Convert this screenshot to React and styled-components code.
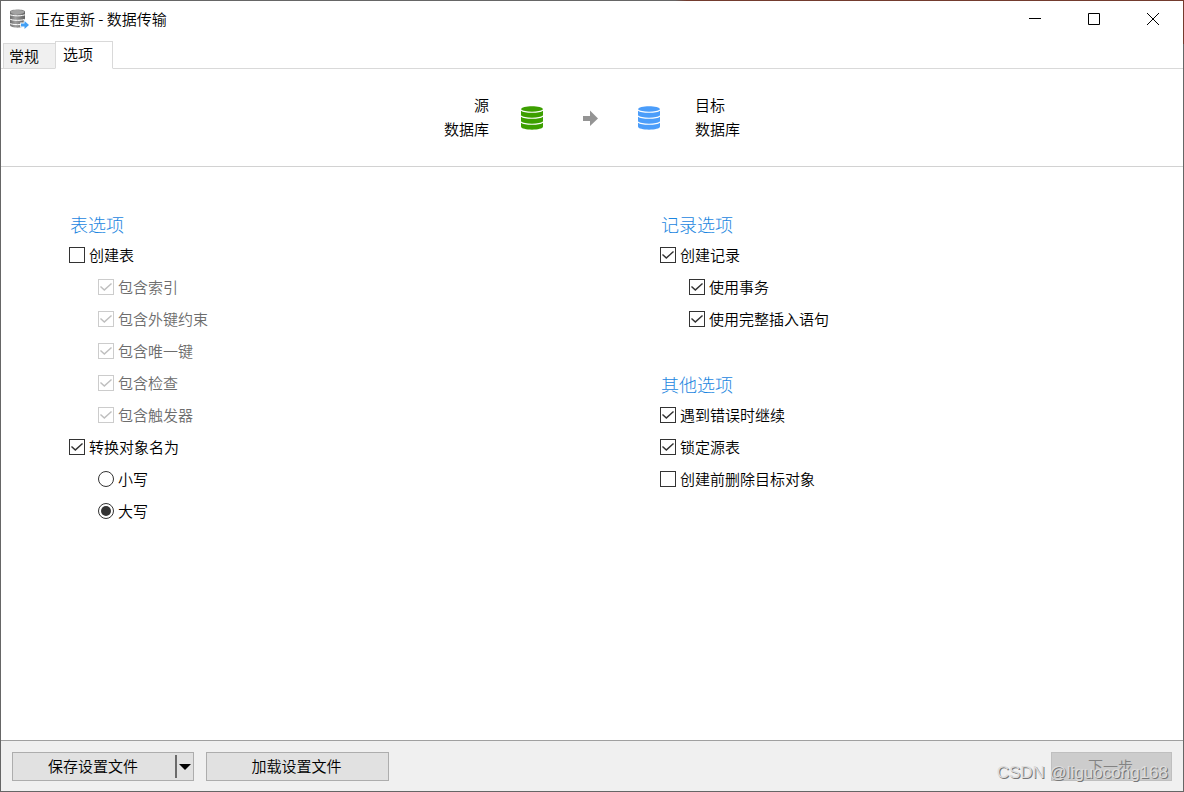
import styled, { createGlobalStyle } from "styled-components";
import { useState } from "react";

const GlobalStyle = createGlobalStyle`
  * {
    box-sizing: border-box;
  }
  body {
    margin: 0;
    font-family: "Noto Sans CJK SC", sans-serif;
    font-size: 15px;
    font-weight: 350;
    line-height: 24px;
    color: #000;
  }
  button {
    font: inherit;
    color: inherit;
    padding: 0;
  }
`;

const Window = styled.div`
  position: relative;
  display: flex;
  flex-direction: column;
  min-height: 100vh;
  padding: 1px;
  background:
    linear-gradient(to right, #666 0 57%, #733b2e 58%) top / 100% 1px no-repeat,
    linear-gradient(#733b2e, #733b2e) top right / 1px 44px no-repeat,
    #666;
`;

const TitleBar = styled.header`
  display: flex;
  align-items: center;
  height: 36px;
  padding-left: 8px;
  background: #fff;
`;

const Title = styled.h1`
  flex: 1;
  margin: 0 0 0 6px;
  font-size: 15px;
  font-weight: 350;
`;

const WindowButton = styled.button`
  display: flex;
  align-items: center;
  justify-content: center;
  width: 59px;
  height: 36px;
  padding-right: 1px;
  border: none;
  background: none;
`;

const TabBar = styled.nav`
  display: flex;
  align-items: flex-end;
  height: 32px;
  padding-left: 2px;
  background: #fff;
  box-shadow: inset 0 -1px #d9d9d9;
`;

const Tab = styled.button`
  width: ${(props) => (props.$active ? "58px" : "52px")};
  height: ${(props) => (props.$active ? "28px" : "26px")};
  padding: ${(props) => (props.$active ? "0 0 2px 7px" : "0 0 0 5px")};
  text-align: left;
  line-height: 24px;
  border: 1px solid #d9d9d9;
  border-bottom-color: ${(props) => (props.$active ? "#fff" : "#d9d9d9")};
  border-right-width: ${(props) => (props.$active ? "1px" : "0")};
  background: ${(props) => (props.$active ? "#fff" : "#f0f0f0")};
`;

const Route = styled.section`
  display: grid;
  grid-template-columns: 1fr auto 1fr;
  align-items: center;
  height: 98px;
  border-bottom: 1px solid #d2d2d2;
  background: #fff;
`;

const Endpoint = styled.div`
  padding-bottom: 2px;
  text-align: ${(props) => props.$align};
`;

const RouteIcons = styled.div`
  display: flex;
  align-items: center;
  gap: 40px;
  padding: 0 35px 0 32px;
`;

const Options = styled.main`
  flex: 1;
  display: grid;
  grid-template-columns: 1fr 1fr;
  padding-top: 42px;
  background: #fff;
`;

const Column = styled.div`
  display: flex;
  flex-direction: column;
  gap: 34px;
  padding-left: 68px;
`;

const Group = styled.fieldset`
  margin: 0;
  padding: 0;
  border: none;
`;

const GroupTitle = styled.legend`
  padding: 0 0 0 1px;
  font-size: 18px;
  font-weight: 300;
  line-height: 30px;
  color: #1c86e0;
`;

const Row = styled.label`
  display: flex;
  align-items: center;
  gap: 4px;
  height: 32px;
  padding-left: ${(props) => (props.$nested ? "29px" : "0")};
  color: ${(props) => (props.$disabled ? "#6d6d6d" : "#000")};
`;

const Check = styled.input`
  appearance: none;
  display: grid;
  place-items: center;
  width: 16px;
  height: 16px;
  margin: 0;
  border: 1px solid #333;
  background: #fff;

  &:disabled {
    border-color: #ccc;
  }
  &:checked::before {
    content: "";
    width: 12px;
    height: 8px;
    background: #333;
    clip-path: polygon(0 50%, 8% 38%, 36% 76%, 92% 0, 100% 12%, 36% 100%);
  }
  &:disabled:checked::before {
    background: #bfbfbf;
  }
`;

const Radio = styled(Check)`
  border-radius: 50%;

  &:checked::before {
    width: 10px;
    height: 10px;
    border-radius: 50%;
    clip-path: none;
  }
`;

const Footer = styled.footer`
  display: flex;
  align-items: flex-start;
  gap: 12px;
  height: 51px;
  padding: 11px;
  border-top: 1px solid #a0a0a0;
  background: #f0f0f0;
`;

const Button = styled.button`
  width: ${(props) => props.$width};
  height: 29px;
  padding: 0 2px 2px 0;
  border: 1px solid #adadad;
  background: #e1e1e1;

  &:disabled {
    margin-left: auto;
    border-color: #bfbfbf;
    background: #ccc;
    color: #838383;
  }
`;

const SplitButton = styled.div`
  display: flex;
  align-items: center;
  width: 182px;
  height: 29px;
  border: 1px solid #adadad;
  background: #e1e1e1;
`;

const SplitMain = styled.button`
  flex: 1;
  height: 27px;
  padding: 0 2px 2px 0;
  border: none;
  background: none;
`;

const SplitArrow = styled.button`
  display: flex;
  align-items: center;
  justify-content: center;
  width: 18px;
  height: 23px;
  border: none;
  border-left: 2px solid #6b6b6b;
  background: none;
`;

const Watermark = styled.div`
  position: absolute;
  right: 16px;
  bottom: 7px;
  font-family: "Liberation Sans", sans-serif;
  font-size: 17px;
  font-weight: 400;
  line-height: 24px;
  color: #dcdcdc;
  text-shadow: 1px 1px #777;
  pointer-events: none;
`;

function Database({ color }) {
  return (
    <svg width="22" height="26" viewBox="0 0 22 26">
      <path
        d="M0 4.5C0 0.3 22 0.3 22 4.5V21.5C22 25.7 0 25.7 0 21.5Z"
        fill={color}
      />
      <path
        d="M0 5C3 8 19 8 22 5M0 11C3 14 19 14 22 11M0 17C3 20 19 20 22 17"
        fill="none"
        stroke="#fff"
        strokeWidth="1.1"
      />
    </svg>
  );
}

function Arrow() {
  return (
    <svg width="15" height="16" viewBox="0 0 15 16">
      <path d="M0 6H7V0.5L15 8.5L7 16V11H0Z" fill="#949494" />
    </svg>
  );
}

function AppIcon() {
  return (
    <svg width="20" height="20" viewBox="0 0 20 20">
      <defs>
        <linearGradient id="metal">
          <stop offset="0" stopColor="#6b6b6b" />
          <stop offset="0.35" stopColor="#a0a0a0" />
          <stop offset="1" stopColor="#606060" />
        </linearGradient>
      </defs>
      <path
        d="M1 3C1 -0.2 16 -0.2 16 3V16C16 19.5 1 19.5 1 16Z"
        fill="url(#metal)"
      />
      <ellipse cx="8.5" cy="3" rx="7" ry="2" fill="#a3a3a3" />
      <path
        d="M0 5.2C3 7.4 14 7.4 17 5.2M0 9.7C3 11.9 14 11.9 17 9.7M0 14C3 16.2 14 16.2 17 14"
        fill="none"
        stroke="#fff"
        strokeWidth="1"
      />
      <path
        d="M12 14.4H15.5V12L20 16L15.5 20V17.6H12Z"
        fill="#42a0f5"
        stroke="#fff"
        strokeWidth="1.6"
        paintOrder="stroke"
      />
    </svg>
  );
}

const tableOptions = [
  { id: "indexes", label: "包含索引" },
  { id: "foreignKeys", label: "包含外键约束" },
  { id: "uniqueKeys", label: "包含唯一键" },
  { id: "checks", label: "包含检查" },
  { id: "triggers", label: "包含触发器" },
];

const recordOptions = [
  { id: "createRecords", label: "创建记录" },
  { id: "transaction", label: "使用事务", nested: true },
  { id: "completeInsert", label: "使用完整插入语句", nested: true },
];

const otherOptions = [
  { id: "continueOnError", label: "遇到错误时继续" },
  { id: "lockSource", label: "锁定源表" },
  { id: "dropTarget", label: "创建前删除目标对象" },
];

function App() {
  const [options, setOptions] = useState({
    createTables: false,
    indexes: true,
    foreignKeys: true,
    uniqueKeys: true,
    checks: true,
    triggers: true,
    convertNames: true,
    createRecords: true,
    transaction: true,
    completeInsert: true,
    continueOnError: true,
    lockSource: true,
    dropTarget: false,
  });
  const [nameCase, setNameCase] = useState("upper");

  const handleChange = (e) => {
    const { id, checked } = e.target;
    setOptions((prev) => ({ ...prev, [id]: checked }));
  };

  const renderOption = ({ id, label, nested, disabled }) => (
    <Row key={id} htmlFor={id} $nested={nested} $disabled={disabled}>
      <Check
        type="checkbox"
        id={id}
        checked={options[id]}
        disabled={disabled}
        onChange={handleChange}
      />
      {label}
    </Row>
  );

  const renderCase = (value, label) => (
    <Row htmlFor={value} $nested $disabled={!options.convertNames}>
      <Radio
        type="radio"
        name="nameCase"
        id={value}
        checked={nameCase === value}
        disabled={!options.convertNames}
        onChange={() => setNameCase(value)}
      />
      {label}
    </Row>
  );

  return (
    <>
      <GlobalStyle />
      <Window>
        <TitleBar>
          <AppIcon />
          <Title>正在更新 - 数据传输</Title>
          <WindowButton aria-label="最小化">
            <svg width="12" height="12" viewBox="0 0 12 12">
              <path d="M0 5.5H12" stroke="#000" />
            </svg>
          </WindowButton>
          <WindowButton aria-label="最大化">
            <svg width="12" height="12" viewBox="0 0 12 12">
              <path d="M0.5 0.5H11.5V11.5H0.5Z" fill="none" stroke="#000" />
            </svg>
          </WindowButton>
          <WindowButton aria-label="关闭">
            <svg width="12" height="12" viewBox="0 0 12 12">
              <path d="M0 0L12 12M12 0L0 12" stroke="#000" />
            </svg>
          </WindowButton>
        </TitleBar>
        <TabBar>
          <Tab>常规</Tab>
          <Tab $active>选项</Tab>
        </TabBar>
        <Route>
          <Endpoint $align="right">
            <div>源</div>
            <div>数据库</div>
          </Endpoint>
          <RouteIcons>
            <Database color="#3c9f00" />
            <Arrow />
            <Database color="#4b9dfa" />
          </RouteIcons>
          <Endpoint $align="left">
            <div>目标</div>
            <div>数据库</div>
          </Endpoint>
        </Route>
        <Options>
          <Column>
            <Group>
              <GroupTitle>表选项</GroupTitle>
              {renderOption({ id: "createTables", label: "创建表" })}
              {tableOptions.map((option) =>
                renderOption({
                  ...option,
                  nested: true,
                  disabled: !options.createTables,
                })
              )}
              {renderOption({ id: "convertNames", label: "转换对象名为" })}
              {renderCase("lower", "小写")}
              {renderCase("upper", "大写")}
            </Group>
          </Column>
          <Column>
            <Group>
              <GroupTitle>记录选项</GroupTitle>
              {recordOptions.map(renderOption)}
            </Group>
            <Group>
              <GroupTitle>其他选项</GroupTitle>
              {otherOptions.map(renderOption)}
            </Group>
          </Column>
        </Options>
        <Footer>
          <SplitButton>
            <SplitMain>保存设置文件</SplitMain>
            <SplitArrow aria-label="更多">
              <svg width="12" height="6" viewBox="0 0 12 6">
                <path d="M0 0H12L6 6Z" />
              </svg>
            </SplitArrow>
          </SplitButton>
          <Button $width="183px">加载设置文件</Button>
          <Button $width="121px" disabled>
            下一步
          </Button>
        </Footer>
        <Watermark>CSDN @liguocong168</Watermark>
      </Window>
    </>
  );
}

export default App;
